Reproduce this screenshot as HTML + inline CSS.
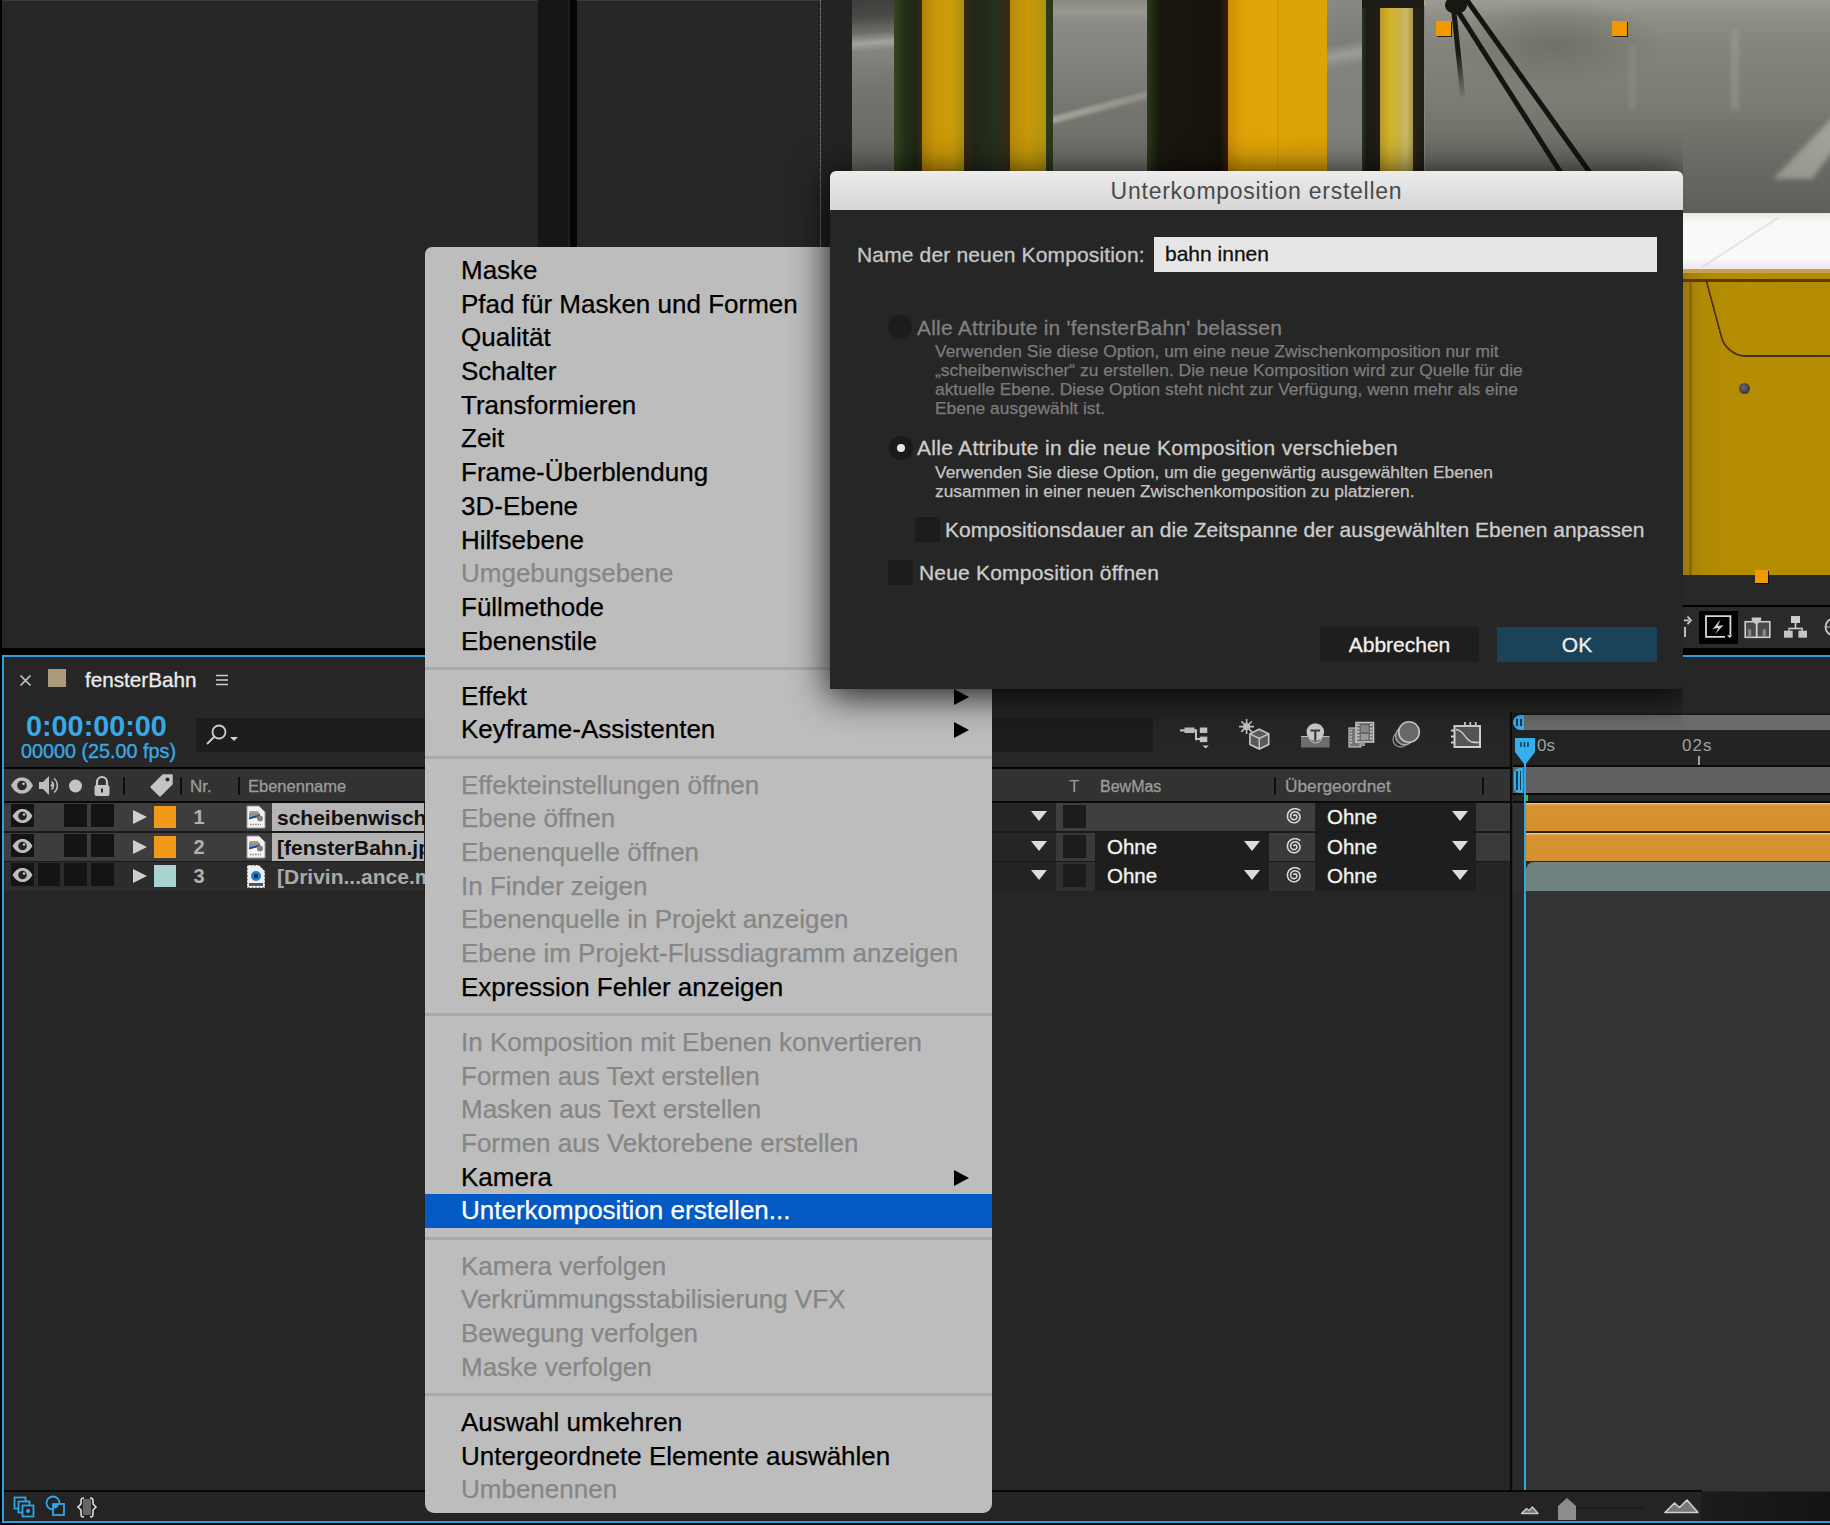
<!DOCTYPE html>
<html><head><meta charset="utf-8">
<style>
*{margin:0;padding:0;box-sizing:border-box}
html,body{width:1830px;height:1525px;overflow:hidden;background:#262626;font-family:"Liberation Sans",sans-serif}
.a{position:absolute}
/* menu */
#menu{position:absolute;left:425px;top:247px;width:567px;height:1266px;background:#bdbdbd;border-radius:7px 7px 9px 9px;padding-top:7px;overflow:hidden}
#menu .i{height:33.7px;line-height:33.7px;font-size:26px;color:#000;-webkit-text-stroke:.25px currentColor;padding-left:36px;white-space:nowrap;position:relative}
#menu .d{color:#868686}
#menu .s{height:21.5px;position:relative}
#menu .s:after{content:"";position:absolute;left:0;right:0;top:9px;height:3px;background:#a9a9a9}
#menu .h{background:#045ac4;color:#fff}
#menu .ar{position:absolute;left:529px;top:9px;width:0;height:0;border-left:15px solid #000;border-top:8px solid transparent;border-bottom:8px solid transparent}
/* dialog */
#dlg{position:absolute;left:830px;top:171px;width:853px;height:518px;background:#262626;border-radius:6px 6px 5px 0;overflow:hidden}
#dlg .title{position:absolute;left:0;top:0;width:100%;height:39px;background:linear-gradient(#ececec,#d6d6d6);text-align:center;font-size:23px;line-height:40px;color:#4a4a4a;letter-spacing:.75px}
.dt{position:absolute;white-space:nowrap;font-size:21px;color:#c8c8c8;-webkit-text-stroke:.3px currentColor}
.tx{white-space:nowrap}
.ds{position:absolute;white-space:nowrap;font-size:17px;line-height:19.6px;color:#8f8f8f;-webkit-text-stroke:.25px currentColor}
</style></head><body>

<!-- top-left panels -->
<div class="a" style="left:0;top:0;width:852px;height:1px;background:#3a3a3a"></div>
<div class="a" style="left:0;top:0;width:2px;height:1525px;background:#000"></div>
<div class="a" style="left:538px;top:0;width:30px;height:648px;background:#161616"></div><div class="a" style="left:568px;top:0;width:2px;height:648px;background:#1e1e1e"></div>
<div class="a" style="left:570px;top:0;width:7px;height:648px;background:#050505"></div>
<div class="a" style="left:820px;top:0;width:1px;height:648px;background:repeating-linear-gradient(#7d8c8a 0,#7d8c8a 1px,#3a3e3e 1px,#3a3e3e 2px)"></div>
<div class="a" style="left:821px;top:0;width:31px;height:648px;background:#232323"></div>

<!-- video image -->
<div id="img" class="a" style="left:852px;top:0;width:978px;height:575px;background:#858480;overflow:hidden">
<div class="a" style="left:0;top:0;width:42px;height:200px;background:linear-gradient(176deg,#3e3e3c 0,#4a4a47 18px,#6e6e6a 34px,#a4a49e 44px,#85857f 52px,#74746f 90px,#676762 170px,#64645f 200px)"></div>
<div class="a" style="left:201px;top:0;width:94px;height:200px;background:linear-gradient(180deg,#8a8a84 0,#98988f 12px,#8c8c86 20px,#83837d 60px,#75756f 110px,#6c6c67 180px)"></div>
<div class="a" style="left:195px;top:118px;width:105px;height:7px;background:linear-gradient(90deg,rgba(170,170,162,.9),rgba(160,160,152,.6));transform:rotate(-15deg);transform-origin:0 0;filter:blur(1.5px)"></div>
<div class="a" style="left:42px;top:0;width:28px;height:200px;background:linear-gradient(90deg,#34461f,#22301a 40%,#1f2616 80%,#3a2a15)"></div>
<div class="a" style="left:70px;top:0;width:42px;height:200px;background:linear-gradient(90deg,#b08208,#c89608 30%,#cc9c08 70%,#a89010)"></div>
<div class="a" style="left:112px;top:0;width:46px;height:200px;background:linear-gradient(90deg,#3a2614,#20281a 25%,#26301e 70%,#3a2a16)"></div>
<div class="a" style="left:158px;top:0;width:36px;height:200px;background:linear-gradient(90deg,#b88a0a,#c89a08 50%,#b09410)"></div>
<div class="a" style="left:194px;top:0;width:7px;height:200px;background:#2a3a1e"></div>
<div class="a" style="left:295px;top:0;width:81px;height:200px;background:linear-gradient(90deg,#2a3a1a,#1a170f 15%,#17130c 90%,#3a2208)"></div>
<div class="a" style="left:376px;top:0;width:99px;height:200px;background:linear-gradient(90deg,#d08a08,#dea307 15%,#e0a507 49%,#d09a07 50%,#dca407 52%,#dda307)"></div>
<div class="a" style="left:475px;top:0;width:36px;height:200px;background:linear-gradient(170deg,#8a8a85 0,#7e7e79 22%,#9c9c96 28%,#83837e 34%,#7d7d78 100%)"></div>
<div class="a" style="left:510px;top:0;width:18px;height:200px;background:linear-gradient(90deg,#2a3320,#1c1a14 30%,#221e16)"></div>
<div class="a" style="left:528px;top:0;width:33px;height:200px;background:linear-gradient(90deg,#b89a2a,#d2b428 30%,#cbb24a 60%,#c8b868 80%,#a89848)"></div>
<div class="a" style="left:561px;top:0;width:11px;height:200px;background:linear-gradient(90deg,#2a2418,#1c1f16)"></div><div class="a" style="left:510px;top:0;width:62px;height:8px;background:#1e1c16;border-radius:0 0 4px 0"></div><div class="a" style="left:572px;top:0;width:11px;height:6px;background:#b8a880"></div>
<div class="a" style="left:573px;top:0;width:405px;height:575px;background:radial-gradient(ellipse 110px 45px at 130px 45px,rgba(110,110,100,.9),rgba(120,119,115,0)),linear-gradient(180deg,#9c9c94 0,#8e8e86 18px,#84847c 50px,#7c7c74 100px,#6e6e68 150px,#5e5e59 213px)"></div>
<div class="a" style="left:777px;top:45px;width:7px;height:65px;background:rgba(160,160,150,.3);filter:blur(2px)"></div>
<div class="a" style="left:879px;top:30px;width:8px;height:80px;background:rgba(165,165,155,.4);filter:blur(2px)"></div>
<div class="a" style="left:592px;top:-6px;width:4.5px;height:240px;background:#121510;transform:rotate(-32.5deg);transform-origin:0 0"></div>
<div class="a" style="left:606px;top:-8px;width:4.5px;height:240px;background:#121510;transform:rotate(-35.5deg);transform-origin:0 0"></div>
<div class="a" style="left:593px;top:-4px;width:22px;height:18px;background:#161812;border-radius:50%"></div>
<div class="a" style="left:599px;top:8px;width:5px;height:92px;background:linear-gradient(#141610,#1a1c14 50%,rgba(30,32,26,0));transform:rotate(-6deg);transform-origin:0 0;border-radius:0 0 3px 3px"></div>
<div class="a" style="left:915px;top:105px;width:70px;height:85px;filter:blur(2.5px)"><div class="a" style="left:0;top:0;width:70px;height:85px;background:linear-gradient(200deg,#a8a8a0,#94948c);clip-path:polygon(6px 74px,45px 74px,70px 40px,70px 8px)"></div></div>
<div class="a" style="left:831px;top:213px;width:147px;height:56px;background:linear-gradient(180deg,#e6e6e4,#f8f8f6 15%,#fafaf8 80%,#ece8f0)"></div><div class="a" style="left:831px;top:269px;width:147px;height:4px;background:#c8a050"></div>
<div class="a" style="left:850px;top:266px;width:90px;height:1.5px;background:rgba(190,190,190,.35);transform:rotate(-33deg);transform-origin:0 0"></div>
<div class="a" style="left:831px;top:273px;width:147px;height:302px;background:linear-gradient(90deg,#9a7608 0,#a88208 6%,#b08a04 15%,#b48d02 40%,#b38c02 100%)"></div>
<div class="a" style="left:831px;top:279px;width:147px;height:3px;background:#5a3a10"></div><div class="a" style="left:853px;top:280px;width:140px;height:77px;border-left:2.5px solid #4e3010;border-bottom:2.5px solid #4e3010;border-bottom-left-radius:20px;transform:skewX(15deg);transform-origin:0 0"></div><div class="a" style="left:837px;top:282px;width:3px;height:293px;background:rgba(90,60,0,.35)"></div>
<div class="a" style="left:887px;top:383px;width:11px;height:11px;background:radial-gradient(circle at 40% 40%,#6a6470,#2a2530);border-radius:50%"></div>
<div class="a" style="left:584px;top:21px;width:15px;height:15px;background:#f09a00;box-shadow:1px 1px 0 #222"></div>
<div class="a" style="left:760px;top:21px;width:15px;height:15px;background:#f09a00;box-shadow:1px 1px 0 #222"></div>
</div>
<div class="a" style="left:1755px;top:570px;width:13px;height:13px;background:#f09a00;box-shadow:1px 1px 0 #111;z-index:2"></div>

<!-- below image strip -->
<div class="a" style="left:1683px;top:575px;width:147px;height:30px;background:#282828"></div>
<div class="a" style="left:852px;top:605px;width:978px;height:2px;background:#000"></div>
<div class="a" style="left:852px;top:607px;width:978px;height:41px;background:#2a2a2a"></div>

<!-- black band + blue top border -->
<div class="a" style="left:0;top:648px;width:1830px;height:7px;background:#000"></div>
<div class="a" style="left:2px;top:655px;width:1828px;height:2px;background:#2d9ee0"></div>
<div class="a" style="left:2px;top:655px;width:2px;height:868px;background:#2d9ee0"></div>
<div class="a" style="left:2px;top:1521px;width:1828px;height:2px;background:#2d9ee0"></div>
<div class="a" style="left:0;top:1523px;width:1830px;height:2px;background:#000"></div>


<!-- TIMELINE PANEL -->
<div id="tl">
<!-- tab row -->
<svg class="a" style="left:19px;top:674px" width="13" height="13"><path d="M1.5 1.5L11.5 11.5M11.5 1.5L1.5 11.5" stroke="#c8c8c8" stroke-width="1.6"/></svg>
<div class="a" style="left:48px;top:669px;width:18px;height:18px;background:#ad9a7a"></div>
<div class="a tx" style="left:85px;top:670px;font-size:20.7px;line-height:20px;color:#ececec;-webkit-text-stroke:.3px #ececec">fensterBahn</div>
<svg class="a" style="left:215px;top:673px" width="14" height="14"><path d="M1 2.5H13M1 7H13M1 11.5H13" stroke="#cfcfcf" stroke-width="1.6"/></svg>
<!-- timecode -->
<div class="a tx" style="left:26px;top:712px;font-size:28.8px;line-height:28px;font-weight:bold;color:#37a9e4">0:00:00:00</div>
<div class="a tx" style="left:21px;top:741px;font-size:19.8px;line-height:20px;color:#37a9e4;-webkit-text-stroke:.35px #37a9e4">00000 (25.00 fps)</div>
<div class="a" style="left:196px;top:718px;width:957px;height:34px;background:#1d1d1d"></div>
<svg class="a" style="left:203px;top:722px" width="36" height="26"><circle cx="16" cy="10" r="6.5" fill="none" stroke="#d0d0d0" stroke-width="1.8"/><path d="M11.5 14.5L4 22" stroke="#d0d0d0" stroke-width="1.8"/><path d="M27 15h8l-4 4z" fill="#d0d0d0"/></svg>
<!-- header row -->
<div class="a" style="left:4px;top:767px;width:1507px;height:2px;background:#050505"></div>
<div class="a" style="left:4px;top:769px;width:1507px;height:32px;background:#323232"></div>
<div class="a" style="left:4px;top:801px;width:1507px;height:2px;background:#0a0a0a"></div>
<svg class="a" style="left:10px;top:775px" width="105" height="22">
<path d="M1 10.5C4.5 4 8 2.5 12 2.5S19.5 4 23 10.5C19.5 17 16 18.5 12 18.5S4.5 17 1 10.5Z" fill="#bdbdbd"/><circle cx="12" cy="10.5" r="4.8" fill="#2a2a2a"/><circle cx="13.5" cy="8.8" r="1.3" fill="#ccc"/>
<path d="M29 7h4l6-6v19l-6-6h-4z" fill="#bdbdbd"/><path d="M41.5 6.5a5 5 0 0 1 0 8" fill="none" stroke="#bdbdbd" stroke-width="1.6"/><path d="M44 3.5a9 9 0 0 1 0 14" fill="none" stroke="#bdbdbd" stroke-width="1.6"/><circle cx="42" cy="10.5" r="1.4" fill="#bdbdbd"/>
<circle cx="65.5" cy="11" r="6.5" fill="#c4c4c4"/>
<path d="M87 10V7a5 5 0 0 1 10 0v3" fill="none" stroke="#c4c4c4" stroke-width="2.2"/><rect x="84.5" y="10" width="15" height="11" rx="2" fill="#c4c4c4"/><rect x="91" y="13.5" width="2" height="4" fill="#2a2a2a"/>
</svg>
<div class="a" style="left:123px;top:777px;width:2px;height:18px;background:#0e0e0e"></div>
<svg class="a" style="left:149px;top:773px" width="26" height="26"><path d="M14 2h9v9L11 23 2 14z" fill="#c4c4c4" stroke="#c4c4c4" stroke-width="1.5" stroke-linejoin="round"/><circle cx="18.5" cy="6.5" r="2" fill="#2a2a2a"/></svg>
<div class="a" style="left:180px;top:777px;width:2px;height:18px;background:#0e0e0e"></div>
<div class="a tx" style="left:190px;top:778px;font-size:17px;line-height:17px;color:#9c9c9c;-webkit-text-stroke:.3px #9c9c9c">Nr.</div>
<div class="a" style="left:238px;top:777px;width:2px;height:18px;background:#0e0e0e"></div>
<div class="a tx" style="left:248px;top:778px;font-size:16.5px;line-height:17px;color:#9c9c9c;-webkit-text-stroke:.3px #9c9c9c">Ebenenname</div>
<div class="a tx" style="left:1069px;top:778px;font-size:17px;line-height:17px;color:#9c9c9c">T</div>
<div class="a tx" style="left:1100px;top:778px;font-size:16px;line-height:17px;color:#9c9c9c;-webkit-text-stroke:.3px #9c9c9c">BewMas</div>
<div class="a" style="left:1274px;top:777px;width:2px;height:18px;background:#0e0e0e"></div>
<div class="a tx" style="left:1285px;top:778px;font-size:17.3px;line-height:17px;color:#9c9c9c;-webkit-text-stroke:.3px #9c9c9c">Übergeordnet</div>
<div class="a" style="left:1482px;top:777px;width:2px;height:18px;background:#0e0e0e"></div>

<!-- rows bg -->
<div class="a" style="left:4px;top:803px;width:1507px;height:28px;background:#252525"></div>
<div class="a" style="left:4px;top:831px;width:1507px;height:2px;background:#1a1a1a"></div>
<div class="a" style="left:4px;top:833px;width:1507px;height:28px;background:#252525"></div>
<div class="a" style="left:4px;top:861px;width:1507px;height:1px;background:#1a1a1a"></div>
<div class="a" style="left:4px;top:862px;width:1507px;height:29px;background:#222"></div>
<div class="a" style="left:4px;top:803px;width:420px;height:28px;background:#3d3d3d"></div>
<div class="a" style="left:4px;top:833px;width:420px;height:28px;background:#3d3d3d"></div>
<div class="a" style="left:4px;top:862px;width:420px;height:29px;background:#2c2c2c"></div>
<div class="a" style="left:11px;top:804px;width:23px;height:23px;background:#141414"></div>
<svg class="a" style="left:11px;top:804px" width="23" height="23"><path d="M1.5 12C5 6.5 8 5 11.5 5S18 6.5 21.5 12C18 17.5 15 19 11.5 19S5 17.5 1.5 12Z" fill="#bdbdbd"/><circle cx="11.5" cy="12" r="4.3" fill="#222"/><circle cx="13" cy="10.5" r="1.2" fill="#ccc"/></svg>
<div class="a" style="left:64px;top:804px;width:23px;height:23px;background:#141414"></div>
<div class="a" style="left:91px;top:804px;width:23px;height:23px;background:#141414"></div>
<div class="a" style="left:133px;top:810px;width:0;height:0;border-left:14px solid #cfcfcf;border-top:7px solid transparent;border-bottom:7px solid transparent"></div>
<div class="a" style="left:154px;top:806px;width:22px;height:22px;background:#f09a1b"></div>
<div class="a tx" style="left:191px;top:807.5px;font-size:20px;line-height:18px;font-weight:bold;color:#b0b0b0;width:16px;text-align:center">1</div>
<svg class="a" style="left:246px;top:805px" width="20" height="24"><path d="M1 1h12l6 6v16H1z" fill="#f4f4f4" stroke="#9a9a9a" stroke-width="1"/><rect x="3.5" y="6" width="9" height="2" fill="#c89a50"/><path d="M3 8h11v3.5L3 14z" fill="#6a9ad0"/><path d="M3 12.5l11-3v2l-11 3z" fill="#2a4a80"/><circle cx="14" cy="13.5" r="3" fill="#8a8070"/><path d="M4 19.5h11" stroke="#888" stroke-width="1.6" stroke-dasharray="1.5 1"/></svg>
<div class="a" style="left:272px;top:803px;width:152px;height:28px;background:#b4b4b4"></div>
<div class="a tx" style="left:277px;top:808px;font-size:21px;line-height:20px;font-weight:bold;color:#111">scheibenwisch</div>
<div class="a" style="left:1031px;top:811px;width:0;height:0;border-top:10px solid #dcdcdc;border-left:8px solid transparent;border-right:8px solid transparent"></div>
<div class="a" style="left:1056px;top:803px;width:259px;height:28px;background:#3f3f3f"></div>
<div class="a" style="left:1063px;top:805px;width:23px;height:23px;background:#1c1c1c"></div>
<svg class="a" style="left:1285px;top:807px" width="20" height="20"><path d="M8.61 9.05 L8.63 8.84 L8.71 8.63 L8.83 8.42 L9.00 8.24 L9.22 8.08 L9.48 7.96 L9.77 7.89 L10.08 7.88 L10.41 7.93 L10.73 8.06 L11.04 8.24 L11.32 8.50 L11.56 8.81 L11.74 9.18 L11.85 9.59 L11.88 10.03 L11.83 10.49 L11.69 10.94 L11.46 11.37 L11.15 11.77 L10.75 12.11 L10.29 12.37 L9.76 12.56 L9.20 12.65 L8.62 12.63 L8.03 12.50 L7.46 12.26 L6.93 11.91 L6.47 11.46 L6.08 10.92 L5.79 10.30 L5.62 9.62 L5.57 8.91 L5.66 8.18 L5.88 7.47 L6.23 6.80 L6.71 6.19 L7.31 5.66 L8.01 5.24 L8.78 4.96 L9.61 4.81 L10.47 4.82 L11.33 4.99 L12.16 5.31 L12.93 5.79 L13.61 6.41 L14.18 7.16 L14.61 8.02 L14.88 8.95 L14.98 9.93 L14.90 10.93 L14.64 11.92 L14.19 12.85 L13.58 13.71 L12.81 14.45 L11.90 15.04 L10.88 15.47 L9.79 15.71 L8.66 15.75 L7.52 15.59 L6.42 15.21 L5.39 14.64 L4.46 13.87 L3.68 12.94 L3.07 11.87 L2.66 10.69 L2.47 9.44 L2.51 8.17 L2.78 6.90 L3.28 5.69 L4.00 4.57 L4.92 3.59 L6.01 2.78 L7.25 2.18 L8.59 1.80 L9.99 1.68 L11.41 1.80 L12.80 2.19 L14.11 2.83 L15.30 3.70" fill="none" stroke="#d8d8d8" stroke-width="1.6"/></svg>
<div class="a" style="left:1315px;top:803px;width:161px;height:28px;background:#1e1e1e"></div>
<div class="a tx" style="left:1327px;top:807.7px;font-size:20.5px;line-height:18px;color:#f2f2f2;-webkit-text-stroke:.35px #f2f2f2">Ohne</div>
<div class="a" style="left:1452px;top:811px;width:0;height:0;border-top:10px solid #dcdcdc;border-left:8px solid transparent;border-right:8px solid transparent"></div>
<div class="a" style="left:1476px;top:803px;width:35px;height:28px;background:#3a3a3a"></div>
<div class="a" style="left:11px;top:834px;width:23px;height:23px;background:#141414"></div>
<svg class="a" style="left:11px;top:834px" width="23" height="23"><path d="M1.5 12C5 6.5 8 5 11.5 5S18 6.5 21.5 12C18 17.5 15 19 11.5 19S5 17.5 1.5 12Z" fill="#bdbdbd"/><circle cx="11.5" cy="12" r="4.3" fill="#222"/><circle cx="13" cy="10.5" r="1.2" fill="#ccc"/></svg>
<div class="a" style="left:64px;top:834px;width:23px;height:23px;background:#141414"></div>
<div class="a" style="left:91px;top:834px;width:23px;height:23px;background:#141414"></div>
<div class="a" style="left:133px;top:840px;width:0;height:0;border-left:14px solid #cfcfcf;border-top:7px solid transparent;border-bottom:7px solid transparent"></div>
<div class="a" style="left:154px;top:836px;width:22px;height:22px;background:#f09a1b"></div>
<div class="a tx" style="left:191px;top:837.5px;font-size:20px;line-height:18px;font-weight:bold;color:#b0b0b0;width:16px;text-align:center">2</div>
<svg class="a" style="left:246px;top:835px" width="20" height="24"><path d="M1 1h12l6 6v16H1z" fill="#f4f4f4" stroke="#9a9a9a" stroke-width="1"/><rect x="3.5" y="6" width="9" height="2" fill="#c89a50"/><path d="M3 8h11v3.5L3 14z" fill="#6a9ad0"/><path d="M3 12.5l11-3v2l-11 3z" fill="#2a4a80"/><circle cx="14" cy="13.5" r="3" fill="#8a8070"/><path d="M4 19.5h11" stroke="#888" stroke-width="1.6" stroke-dasharray="1.5 1"/></svg>
<div class="a" style="left:272px;top:833px;width:152px;height:28px;background:#b4b4b4"></div>
<div class="a tx" style="left:277px;top:838px;font-size:21px;line-height:20px;font-weight:bold;color:#111">[fensterBahn.jp</div>
<div class="a" style="left:1031px;top:841px;width:0;height:0;border-top:10px solid #dcdcdc;border-left:8px solid transparent;border-right:8px solid transparent"></div>
<div class="a" style="left:1056px;top:833px;width:39px;height:28px;background:#3a3a3a"></div>
<div class="a" style="left:1095px;top:833px;width:174px;height:28px;background:#1e1e1e"></div>
<div class="a tx" style="left:1107px;top:837.7px;font-size:20.5px;line-height:18px;color:#f2f2f2;-webkit-text-stroke:.35px #f2f2f2">Ohne</div>
<div class="a" style="left:1244px;top:841px;width:0;height:0;border-top:10px solid #dcdcdc;border-left:8px solid transparent;border-right:8px solid transparent"></div>
<div class="a" style="left:1269px;top:833px;width:46px;height:28px;background:#3a3a3a"></div>
<div class="a" style="left:1063px;top:835px;width:23px;height:23px;background:#1c1c1c"></div>
<svg class="a" style="left:1285px;top:837px" width="20" height="20"><path d="M8.61 9.05 L8.63 8.84 L8.71 8.63 L8.83 8.42 L9.00 8.24 L9.22 8.08 L9.48 7.96 L9.77 7.89 L10.08 7.88 L10.41 7.93 L10.73 8.06 L11.04 8.24 L11.32 8.50 L11.56 8.81 L11.74 9.18 L11.85 9.59 L11.88 10.03 L11.83 10.49 L11.69 10.94 L11.46 11.37 L11.15 11.77 L10.75 12.11 L10.29 12.37 L9.76 12.56 L9.20 12.65 L8.62 12.63 L8.03 12.50 L7.46 12.26 L6.93 11.91 L6.47 11.46 L6.08 10.92 L5.79 10.30 L5.62 9.62 L5.57 8.91 L5.66 8.18 L5.88 7.47 L6.23 6.80 L6.71 6.19 L7.31 5.66 L8.01 5.24 L8.78 4.96 L9.61 4.81 L10.47 4.82 L11.33 4.99 L12.16 5.31 L12.93 5.79 L13.61 6.41 L14.18 7.16 L14.61 8.02 L14.88 8.95 L14.98 9.93 L14.90 10.93 L14.64 11.92 L14.19 12.85 L13.58 13.71 L12.81 14.45 L11.90 15.04 L10.88 15.47 L9.79 15.71 L8.66 15.75 L7.52 15.59 L6.42 15.21 L5.39 14.64 L4.46 13.87 L3.68 12.94 L3.07 11.87 L2.66 10.69 L2.47 9.44 L2.51 8.17 L2.78 6.90 L3.28 5.69 L4.00 4.57 L4.92 3.59 L6.01 2.78 L7.25 2.18 L8.59 1.80 L9.99 1.68 L11.41 1.80 L12.80 2.19 L14.11 2.83 L15.30 3.70" fill="none" stroke="#d8d8d8" stroke-width="1.6"/></svg>
<div class="a" style="left:1315px;top:833px;width:161px;height:28px;background:#1e1e1e"></div>
<div class="a tx" style="left:1327px;top:837.7px;font-size:20.5px;line-height:18px;color:#f2f2f2;-webkit-text-stroke:.35px #f2f2f2">Ohne</div>
<div class="a" style="left:1452px;top:841px;width:0;height:0;border-top:10px solid #dcdcdc;border-left:8px solid transparent;border-right:8px solid transparent"></div>
<div class="a" style="left:1476px;top:833px;width:35px;height:28px;background:#3a3a3a"></div>
<div class="a" style="left:11px;top:863px;width:23px;height:23px;background:#141414"></div>
<svg class="a" style="left:11px;top:863px" width="23" height="23"><path d="M1.5 12C5 6.5 8 5 11.5 5S18 6.5 21.5 12C18 17.5 15 19 11.5 19S5 17.5 1.5 12Z" fill="#bdbdbd"/><circle cx="11.5" cy="12" r="4.3" fill="#222"/><circle cx="13" cy="10.5" r="1.2" fill="#ccc"/></svg>
<div class="a" style="left:38px;top:863px;width:22px;height:23px;background:#141414"></div>
<div class="a" style="left:64px;top:863px;width:23px;height:23px;background:#141414"></div>
<div class="a" style="left:91px;top:863px;width:23px;height:23px;background:#141414"></div>
<div class="a" style="left:133px;top:869px;width:0;height:0;border-left:14px solid #cfcfcf;border-top:7px solid transparent;border-bottom:7px solid transparent"></div>
<div class="a" style="left:154px;top:865px;width:22px;height:22px;background:#a9d4d2"></div>
<div class="a tx" style="left:191px;top:866.5px;font-size:20px;line-height:18px;font-weight:bold;color:#b0b0b0;width:16px;text-align:center">3</div>
<svg class="a" style="left:246px;top:864px" width="20" height="25"><path d="M1 1h12l6 6v17H1z" fill="#eee" stroke="#333" stroke-width="1" stroke-dasharray="2 1.5"/><circle cx="10" cy="12" r="5" fill="#1a7fd0"/><circle cx="10" cy="12" r="2.2" fill="#0a2a50"/><rect x="3" y="19" width="14" height="3" fill="#555"/></svg>
<div class="a tx" style="left:277px;top:867px;font-size:21px;line-height:20px;font-weight:bold;color:#aaa">[Drivin...ance.m</div>
<div class="a" style="left:1031px;top:870px;width:0;height:0;border-top:10px solid #dcdcdc;border-left:8px solid transparent;border-right:8px solid transparent"></div>
<div class="a" style="left:1056px;top:862px;width:39px;height:29px;background:#303030"></div>
<div class="a" style="left:1095px;top:862px;width:174px;height:28px;background:#1e1e1e"></div>
<div class="a tx" style="left:1107px;top:866.7px;font-size:20.5px;line-height:18px;color:#f2f2f2;-webkit-text-stroke:.35px #f2f2f2">Ohne</div>
<div class="a" style="left:1244px;top:870px;width:0;height:0;border-top:10px solid #dcdcdc;border-left:8px solid transparent;border-right:8px solid transparent"></div>
<div class="a" style="left:1269px;top:862px;width:46px;height:29px;background:#303030"></div>
<div class="a" style="left:1063px;top:864px;width:23px;height:23px;background:#1c1c1c"></div>
<svg class="a" style="left:1285px;top:866px" width="20" height="20"><path d="M8.61 9.05 L8.63 8.84 L8.71 8.63 L8.83 8.42 L9.00 8.24 L9.22 8.08 L9.48 7.96 L9.77 7.89 L10.08 7.88 L10.41 7.93 L10.73 8.06 L11.04 8.24 L11.32 8.50 L11.56 8.81 L11.74 9.18 L11.85 9.59 L11.88 10.03 L11.83 10.49 L11.69 10.94 L11.46 11.37 L11.15 11.77 L10.75 12.11 L10.29 12.37 L9.76 12.56 L9.20 12.65 L8.62 12.63 L8.03 12.50 L7.46 12.26 L6.93 11.91 L6.47 11.46 L6.08 10.92 L5.79 10.30 L5.62 9.62 L5.57 8.91 L5.66 8.18 L5.88 7.47 L6.23 6.80 L6.71 6.19 L7.31 5.66 L8.01 5.24 L8.78 4.96 L9.61 4.81 L10.47 4.82 L11.33 4.99 L12.16 5.31 L12.93 5.79 L13.61 6.41 L14.18 7.16 L14.61 8.02 L14.88 8.95 L14.98 9.93 L14.90 10.93 L14.64 11.92 L14.19 12.85 L13.58 13.71 L12.81 14.45 L11.90 15.04 L10.88 15.47 L9.79 15.71 L8.66 15.75 L7.52 15.59 L6.42 15.21 L5.39 14.64 L4.46 13.87 L3.68 12.94 L3.07 11.87 L2.66 10.69 L2.47 9.44 L2.51 8.17 L2.78 6.90 L3.28 5.69 L4.00 4.57 L4.92 3.59 L6.01 2.78 L7.25 2.18 L8.59 1.80 L9.99 1.68 L11.41 1.80 L12.80 2.19 L14.11 2.83 L15.30 3.70" fill="none" stroke="#d8d8d8" stroke-width="1.6"/></svg>
<div class="a" style="left:1315px;top:862px;width:161px;height:28px;background:#1e1e1e"></div>
<div class="a tx" style="left:1327px;top:866.7px;font-size:20.5px;line-height:18px;color:#f2f2f2;-webkit-text-stroke:.35px #f2f2f2">Ohne</div>
<div class="a" style="left:1452px;top:870px;width:0;height:0;border-top:10px solid #dcdcdc;border-left:8px solid transparent;border-right:8px solid transparent"></div>
<div class="a" style="left:1476px;top:862px;width:35px;height:28px;background:#252525"></div>

<!-- toolbar icons mid -->
<svg class="a" style="left:1170px;top:705px" width="330" height="60">
<g fill="#c4c4c4" stroke="none">
<rect x="10" y="24.3" width="16" height="2.2"/><rect x="14.5" y="22.5" width="10" height="5.5" fill="#bdbdbd"/><rect x="25" y="24.3" width="2" height="11"/><rect x="26" y="33" width="4" height="2"/><rect x="29.8" y="22.5" width="7.5" height="5.5"/><rect x="29.8" y="31.6" width="7.5" height="5.5"/><path d="M32.5 40.6h6.3l-3.15 2.9z"/>
</g>
<g stroke="#c4c4c4" stroke-width="1.6"><path d="M76.6 14v15M69 21.6h15M71.3 16.3l10.6 10.6M81.9 16.3L71.3 26.9"/></g>
<circle cx="76.6" cy="21.6" r="3.5" fill="#c4c4c4"/>
<path d="M89.3 24.2l9.4 4.6v10.6l-9.4 4.6-9.4-4.6V28.8z" fill="#5a5a5a" stroke="#c8c8c8" stroke-width="1.6"/>
<path d="M79.9 28.8l9.4 4.6 9.4-4.6M89.3 33.4v10.4" fill="none" stroke="#c8c8c8" stroke-width="1.4"/>
<path d="M131 31.5h28.6v11H131z" fill="#6e6e6e"/><path d="M131 31.5h8a6.5 6.5 0 0 0 13 0h7.6" fill="none" stroke="#bdbdbd" stroke-width="1"/>
<circle cx="145.3" cy="27" r="8.8" fill="#c8c8c8"/><path d="M140.5 25.5h9.6M145.3 25.5v10" stroke="#3a3a3a" stroke-width="2.2"/>
<rect x="179" y="23" width="12" height="19" fill="#777" stroke="#bdbdbd" stroke-width="1.2"/>
<rect x="186" y="17.5" width="17.5" height="19.5" fill="#6a6a6a" stroke="#c8c8c8" stroke-width="1.6"/>
<path d="M188.3 19v17M201.2 19v17" stroke="#c8c8c8" stroke-width="2.4" stroke-dasharray="2 1.4"/>
<rect x="191" y="20" width="7.5" height="7" fill="#8a8a8a"/><rect x="191" y="29" width="7.5" height="6" fill="#999"/>
<path d="M181 25v15" stroke="#c8c8c8" stroke-width="1.6" stroke-dasharray="1.6 1.4"/>
<rect x="189" y="37" width="6" height="4" fill="#999"/>
<circle cx="230.5" cy="34.5" r="7.5" fill="none" stroke="#8a8a8a" stroke-width="1.4"/>
<circle cx="234.5" cy="31" r="9" fill="#5a5a5a" stroke="#a8a8a8" stroke-width="1.4"/>
<circle cx="239" cy="27" r="10.3" fill="#6a6a6a" stroke="#c8c8c8" stroke-width="1.6"/>
<rect x="284.5" y="21" width="25.5" height="21" fill="#555" stroke="#cfcfcf" stroke-width="2"/>
<path d="M295 17v4M300.3 17v4M305.7 17v4M281 25.5h3.5M281 31.5h3.5M281 37.5h3.5" stroke="#cfcfcf" stroke-width="1.8"/>
<path d="M286 24.5c8 0 9 11 16 12.5 3 .6 5 .5 7 .5" fill="none" stroke="#cfcfcf" stroke-width="1.4"/>
</svg>

<!-- right timeline area -->
<div class="a" style="left:1510px;top:712px;width:2px;height:779px;background:#0a0a0a"></div><div class="a" style="left:1512px;top:712px;width:1px;height:779px;background:#222"></div>
<div class="a" style="left:1513px;top:713px;width:317px;height:17px;background:#1a1a1a"></div>
<div class="a" style="left:1523px;top:715px;width:307px;height:15px;background:#6b6b6b"></div>
<div class="a" style="left:1513px;top:715px;width:11px;height:15px;background:#35b0ec;border-radius:8px 0 0 8px"></div><div class="a" style="left:1516px;top:719px;width:2px;height:7px;background:#0d3a55"></div><div class="a" style="left:1519.5px;top:719px;width:2px;height:7px;background:#0d3a55"></div>
<div class="a" style="left:1513px;top:730px;width:317px;height:36px;background:#232323"></div>
<div class="a tx" style="left:1537px;top:737px;font-size:17px;line-height:17px;color:#a0a0a0">0s</div>
<div class="a tx" style="left:1682px;top:737px;font-size:17px;line-height:17px;color:#a0a0a0;letter-spacing:1px">02s</div>
<div class="a" style="left:1698px;top:756px;width:2px;height:9px;background:#a0a0a0"></div>
<div class="a" style="left:1513px;top:765px;width:317px;height:2px;background:#0a0a0a"></div>
<div class="a" style="left:1513px;top:767px;width:317px;height:26px;background:#616161"></div>
<div class="a" style="left:1514px;top:768px;width:9px;height:25px;background:#35b0ec;border-radius:6px 0 0 6px"></div><div class="a" style="left:1516px;top:771px;width:1.5px;height:19px;background:#0d3a55"></div><div class="a" style="left:1519.5px;top:771px;width:1.5px;height:19px;background:#0d3a55"></div>
<div class="a" style="left:1513px;top:793px;width:317px;height:10px;background:#0a0a0a"></div><div class="a" style="left:1513px;top:795px;width:317px;height:6px;background:#252525"></div><div class="a" style="left:1526px;top:795px;width:2px;height:6px;background:#2ad02a"></div>
<div class="a" style="left:1513px;top:803px;width:11px;height:88px;background:#2e2e2e"></div>
<div class="a" style="left:1526px;top:803px;width:304px;height:28px;background:linear-gradient(#f4c070 0,#f4c070 1px,#d8922f 2px,#d49030)"></div>
<div class="a" style="left:1526px;top:833px;width:304px;height:28px;background:linear-gradient(#f4c070 0,#f4c070 1px,#d8922f 2px,#d49030)"></div>
<div class="a" style="left:1526px;top:862px;width:304px;height:29px;background:#6e8280;border-top-left-radius:8px"></div>
<div class="a" style="left:1513px;top:891px;width:317px;height:600px;background:#333"></div>
<div class="a" style="left:1513px;top:891px;width:11px;height:600px;background:#2a2a2a"></div>
<div class="a" style="left:1524px;top:760px;width:2px;height:731px;background:#2fa6e6"></div>
<svg class="a" style="left:1513px;top:737px" width="24" height="30"><path d="M2 1h20v14l-10 13L2 15z" fill="#35b0ec"/><path d="M8 5v5M11.5 5v5M15 5v5" stroke="#0d3a55" stroke-width="1.5"/></svg>

<!-- bottom bar -->
<div class="a" style="left:4px;top:1490px;width:1698px;height:2px;background:#080808"></div>
<div class="a" style="left:4px;top:1492px;width:1826px;height:29px;background:#242424"></div>
<div class="a" style="left:1701px;top:1492px;width:129px;height:29px;background:linear-gradient(90deg,#1c1c1c,#131313)"></div>
<svg class="a" style="left:12px;top:1495px" width="90" height="24">
<rect x="2.5" y="2.5" width="11" height="11" fill="none" stroke="#2fa6e6" stroke-width="1.8"/><rect x="6.5" y="6.5" width="11" height="11" fill="#242424" stroke="#2fa6e6" stroke-width="1.8"/><rect x="10.5" y="10.5" width="11" height="11" fill="#242424" stroke="#2fa6e6" stroke-width="1.8"/><circle cx="16" cy="16" r="2" fill="#2fa6e6"/>
<circle cx="41" cy="8" r="6.5" fill="none" stroke="#2fa6e6" stroke-width="1.8"/><rect x="41" y="9" width="11" height="11" fill="#242424" stroke="#2fa6e6" stroke-width="1.8"/><path d="M41 9h6a6.5 6.5 0 0 1-6 5z" fill="#2fa6e6"/>
<path d="M72 3c-3 0-3 1-3 4v2l-3 3 3 3v3c0 3 0 4 3 4M78 3c3 0 3 1 3 4v2l3 3-3 3v3c0 3 0 4-3 4" fill="none" stroke="#ddd" stroke-width="1.6"/><rect x="71" y="4" width="8" height="16" fill="#666"/>
</svg>
<svg class="a" style="left:1500px;top:1480px" width="210" height="45">
<path d="M21.5 33.5l5-5 2.5 2 3.5-3.5 5.5 6.5z" fill="#777" stroke="#c8c8c8" stroke-width="1.3" stroke-linejoin="round"/>
<path d="M58 26l9-8 9 8v14H58z" fill="#8c8c8c"/><path d="M76 28h68" stroke="#1a1a1a" stroke-width="1.5"/>
<path d="M165 32.5l9.5-9.5 5 4.5 7.5-7.5 11 12.5z" fill="#777" stroke="#cfcfcf" stroke-width="1.6" stroke-linejoin="round"/>
</svg>

<!-- right toolbar under image -->
<div class="a" style="left:1699px;top:611px;width:39px;height:33px;background:#000"></div>
<svg class="a" style="left:1680px;top:600px" width="150" height="60">
<path d="M4 20.3h5M7.5 16.5l3.5 3.8-3.5 3.8" fill="none" stroke="#c8c8c8" stroke-width="1.8"/><rect x="4" y="27" width="2" height="10" fill="#bbb"/>
<path d="M50.4 35V16.2H26v20.7h19" fill="none" stroke="#d8d8d8" stroke-width="1.8"/><path d="M47 35.3h5.5l-2.75 2.7z" fill="#ddd"/>
<path d="M40.5 19.5l-7.8 9.6 5.6-1.2-3 6.2 8.2-9-5.6 1z" fill="#d0d0d0"/>
<rect x="65.2" y="21.7" width="24.6" height="15.6" fill="#4a4a4a" stroke="#d0d0d0" stroke-width="1.6"/>
<path d="M67.5 36V30c0-2 3-2 3 0v6M83.5 36V30c0-2 3-2 3 0v6" fill="#6a6a6a" stroke="none"/>
<rect x="68.6" y="29.5" width="2.6" height="7" fill="#8a8a8a"/><rect x="82.6" y="29.5" width="2.6" height="7" fill="#8a8a8a"/>
<path d="M71.7 17.6h9.4v2.5l-3.2 3.6h-3l-3.2-3.6z" fill="#c8c8c8"/><rect x="75.8" y="23" width="1.8" height="14.3" fill="#d0d0d0"/>
<rect x="111" y="16" width="9" height="7" fill="#cfcfcf"/><path d="M115.5 23v5.3M109 29.5V31M122 29.5V31" stroke="#cfcfcf" stroke-width="1.6"/><path d="M108.2 28.5h14.8" stroke="#cfcfcf" stroke-width="1.6"/>
<rect x="104" y="30.7" width="8.7" height="7" fill="#c4c4c4"/><rect x="118.4" y="30.7" width="8.6" height="7" fill="#c4c4c4"/>
<rect x="136" y="11" width="1" height="33" fill="#2e2e2e"/>
<circle cx="154" cy="27" r="8.5" fill="none" stroke="#c8c8c8" stroke-width="1.8"/><path d="M146 27h16M154 19c-3 3-3 13 0 16" fill="none" stroke="#c8c8c8" stroke-width="1.2"/>
</svg>
</div>

<!-- MENU -->
<div id="menu">
<div class="i">Maske</div>
<div class="i">Pfad für Masken und Formen</div>
<div class="i">Qualität</div>
<div class="i">Schalter</div>
<div class="i">Transformieren</div>
<div class="i">Zeit</div>
<div class="i">Frame-Überblendung</div>
<div class="i">3D-Ebene</div>
<div class="i">Hilfsebene</div>
<div class="i d">Umgebungsebene</div>
<div class="i">Füllmethode</div>
<div class="i">Ebenenstile</div>
<div class="s"></div>
<div class="i">Effekt<span class="ar"></span></div>
<div class="i">Keyframe-Assistenten<span class="ar"></span></div>
<div class="s"></div>
<div class="i d">Effekteinstellungen öffnen</div>
<div class="i d">Ebene öffnen</div>
<div class="i d">Ebenenquelle öffnen</div>
<div class="i d">In Finder zeigen</div>
<div class="i d">Ebenenquelle in Projekt anzeigen</div>
<div class="i d">Ebene im Projekt-Flussdiagramm anzeigen</div>
<div class="i">Expression Fehler anzeigen</div>
<div class="s"></div>
<div class="i d">In Komposition mit Ebenen konvertieren</div>
<div class="i d">Formen aus Text erstellen</div>
<div class="i d">Masken aus Text erstellen</div>
<div class="i d">Formen aus Vektorebene erstellen</div>
<div class="i">Kamera<span class="ar"></span></div>
<div class="i h">Unterkomposition erstellen...</div>
<div class="s"></div>
<div class="i d">Kamera verfolgen</div>
<div class="i d">Verkrümmungsstabilisierung VFX</div>
<div class="i d">Bewegung verfolgen</div>
<div class="i d">Maske verfolgen</div>
<div class="s"></div>
<div class="i">Auswahl umkehren</div>
<div class="i">Untergeordnete Elemente auswählen</div>
<div class="i d">Umbenennen</div>
</div>

<!-- DIALOG -->
<div class="a" style="left:600px;top:0;width:1083px;height:900px;overflow:hidden"><div class="a" style="left:230px;top:171px;width:853px;height:518px;border-radius:6px 6px 5px 0;box-shadow:0 5px 36px 2px rgba(0,0,0,.85)"></div></div>
<div id="dlg">
<div class="title">Unterkomposition erstellen</div>
<div class="dt" style="left:27px;top:73px;line-height:21px;color:#c6c6c6;letter-spacing:.15px">Name der neuen Komposition:</div>
<div class="a" style="left:324px;top:66px;width:503px;height:35px;background:#e6e6e6"></div>
<div class="dt" style="left:335px;top:72px;line-height:21px;color:#111">bahn innen</div>
<div class="a" style="left:58px;top:144px;width:24px;height:24px;border-radius:50%;background:#1c1c1c"></div>
<div class="dt" style="left:87px;top:145.5px;line-height:21px;color:#808080;letter-spacing:.2px">Alle Attribute in 'fensterBahn' belassen</div>
<div class="ds" style="left:105px;top:171px;font-size:17.4px;line-height:19.1px;color:#7c7c7c">Verwenden Sie diese Option, um eine neue Zwischenkomposition nur mit<br>„scheibenwischer“ zu erstellen. Die neue Komposition wird zur Quelle für die<br>aktuelle Ebene. Diese Option steht nicht zur Verfügung, wenn mehr als eine<br>Ebene ausgewählt ist.</div>
<div class="a" style="left:59px;top:265px;width:24px;height:24px;border-radius:50%;background:#1a1a1a"></div>
<div class="a" style="left:67px;top:273px;width:8px;height:8px;border-radius:50%;background:#e8e8e8"></div>
<div class="dt" style="left:87px;top:266px;line-height:21px;color:#cdcdcd;letter-spacing:.28px">Alle Attribute in die neue Komposition verschieben</div>
<div class="ds" style="left:105px;top:291.5px;font-size:17.4px;line-height:19.2px;color:#c4c4c4">Verwenden Sie diese Option, um die gegenwärtig ausgewählten Ebenen<br>zusammen in einer neuen Zwischenkomposition zu platzieren.</div>
<div class="a" style="left:85px;top:346px;width:25px;height:25px;background:#1c1c1c"></div>
<div class="dt" style="left:115px;top:348px;line-height:21px;color:#cdcdcd">Kompositionsdauer an die Zeitspanne der ausgewählten Ebenen anpassen</div>
<div class="a" style="left:58px;top:389px;width:25px;height:25px;background:#1c1c1c"></div>
<div class="dt" style="left:89px;top:390.5px;line-height:21px;color:#cdcdcd;letter-spacing:.2px">Neue Komposition öffnen</div>
<div class="a" style="left:490px;top:456px;width:159px;height:35px;background:#1e1e1e"></div>
<div class="dt" style="left:490px;top:462.5px;width:159px;text-align:center;line-height:21px;color:#f0f0f0">Abbrechen</div>
<div class="a" style="left:667px;top:456px;width:160px;height:35px;background:#1a4259"></div>
<div class="dt" style="left:667px;top:462.5px;width:160px;text-align:center;line-height:21px;color:#f0f0f0">OK</div>
</div>

</body></html>
